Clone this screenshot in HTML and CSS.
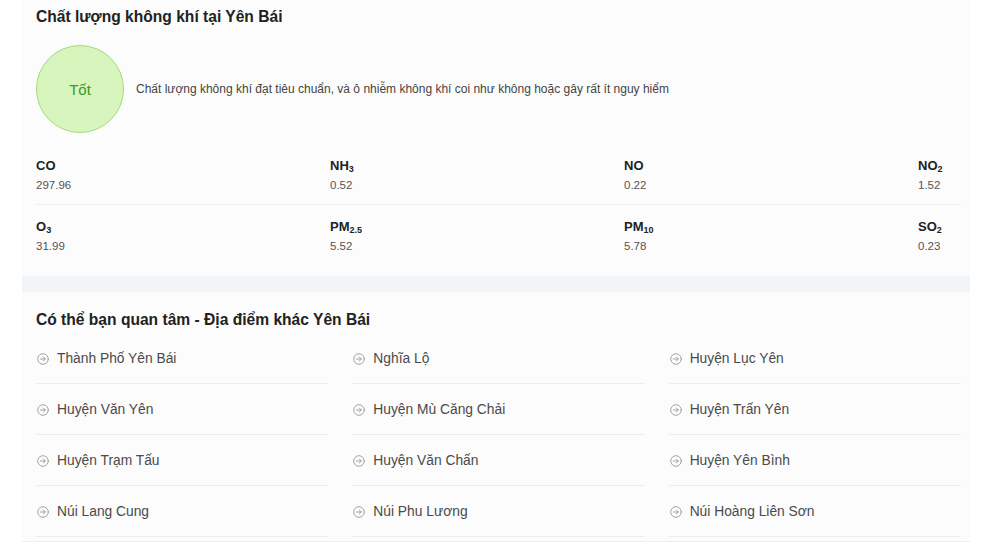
FILE: index.html
```html
<!DOCTYPE html>
<html lang="vi">
<head>
<meta charset="utf-8">
<link rel="stylesheet" href="styles.css">
</head>
<body>
<div class="wrap">
  <section class="card aq">
    <h2 class="title">Chất lượng không khí tại Yên Bái</h2>
    <div class="status">
      <div class="badge">Tốt</div>
      <p class="desc">Chất lượng không khí đạt tiêu chuẩn, và ô nhiễm không khí coi như không hoặc gây rất ít nguy hiểm</p>
    </div>
    <div class="prow">
      <div class="pol"><div class="pname">CO</div><div class="pval">297.96</div></div>
      <div class="pol"><div class="pname">NH<sub>3</sub></div><div class="pval">0.52</div></div>
      <div class="pol"><div class="pname">NO</div><div class="pval">0.22</div></div>
      <div class="pol"><div class="pname">NO<sub>2</sub></div><div class="pval">1.52</div></div>
    </div>
    <div class="prow last">
      <div class="pol"><div class="pname">O<sub>3</sub></div><div class="pval">31.99</div></div>
      <div class="pol"><div class="pname">PM<sub>2.5</sub></div><div class="pval">5.52</div></div>
      <div class="pol"><div class="pname">PM<sub>10</sub></div><div class="pval">5.78</div></div>
      <div class="pol"><div class="pname">SO<sub>2</sub></div><div class="pval">0.23</div></div>
    </div>
  </section>
  <div class="band"></div>
  <section class="card places">
    <h2 class="title">Có thể bạn quan tâm - Địa điểm khác Yên Bái</h2>
    <ul class="plist">
      <li><svg class="ic" viewBox="0 0 12 12"><circle cx="6" cy="6" r="5.3"/><path d="M3.3 6h5M6.3 4l2 2-2 2"/></svg>Thành Phố Yên Bái</li>
      <li><svg class="ic" viewBox="0 0 12 12"><circle cx="6" cy="6" r="5.3"/><path d="M3.3 6h5M6.3 4l2 2-2 2"/></svg>Nghĩa Lộ</li>
      <li><svg class="ic" viewBox="0 0 12 12"><circle cx="6" cy="6" r="5.3"/><path d="M3.3 6h5M6.3 4l2 2-2 2"/></svg>Huyện Lục Yên</li>
      <li><svg class="ic" viewBox="0 0 12 12"><circle cx="6" cy="6" r="5.3"/><path d="M3.3 6h5M6.3 4l2 2-2 2"/></svg>Huyện Văn Yên</li>
      <li><svg class="ic" viewBox="0 0 12 12"><circle cx="6" cy="6" r="5.3"/><path d="M3.3 6h5M6.3 4l2 2-2 2"/></svg>Huyện Mù Căng Chải</li>
      <li><svg class="ic" viewBox="0 0 12 12"><circle cx="6" cy="6" r="5.3"/><path d="M3.3 6h5M6.3 4l2 2-2 2"/></svg>Huyện Trấn Yên</li>
      <li><svg class="ic" viewBox="0 0 12 12"><circle cx="6" cy="6" r="5.3"/><path d="M3.3 6h5M6.3 4l2 2-2 2"/></svg>Huyện Trạm Tấu</li>
      <li><svg class="ic" viewBox="0 0 12 12"><circle cx="6" cy="6" r="5.3"/><path d="M3.3 6h5M6.3 4l2 2-2 2"/></svg>Huyện Văn Chấn</li>
      <li><svg class="ic" viewBox="0 0 12 12"><circle cx="6" cy="6" r="5.3"/><path d="M3.3 6h5M6.3 4l2 2-2 2"/></svg>Huyện Yên Bình</li>
      <li><svg class="ic" viewBox="0 0 12 12"><circle cx="6" cy="6" r="5.3"/><path d="M3.3 6h5M6.3 4l2 2-2 2"/></svg>Núi Lang Cung</li>
      <li><svg class="ic" viewBox="0 0 12 12"><circle cx="6" cy="6" r="5.3"/><path d="M3.3 6h5M6.3 4l2 2-2 2"/></svg>Núi Phu Lương</li>
      <li><svg class="ic" viewBox="0 0 12 12"><circle cx="6" cy="6" r="5.3"/><path d="M3.3 6h5M6.3 4l2 2-2 2"/></svg>Núi Hoàng Liên Sơn</li>
    </ul>
  </section>
  <div class="foot"></div>
</div>
</body>
</html>
```

FILE: styles.css
```css
* { box-sizing: border-box; }
html, body { margin: 0; padding: 0; background: #fff; }
body {
  font-family: "Liberation Sans", Arial, sans-serif;
  color: #333;
}
.wrap {
  width: 948px;
  margin-left: 22px;
}
.card {
  background: #fcfcfc;
  padding: 7px 9px 0 14px;
}
.title {
  margin: 0;
  font-size: 15.6px;
  line-height: 20px;
  font-weight: bold;
  color: #222;
}
.status {
  display: flex;
  align-items: center;
  gap: 12px;
  margin-top: 18px;
}
.badge {
  width: 88px;
  height: 88px;
  flex: none;
  border-radius: 50%;
  background: #d7f5bd;
  border: 1px solid #9fdc7c;
  display: flex;
  align-items: center;
  justify-content: center;
  color: #3d9a22;
  font-size: 15px;
}
.desc {
  margin: 0;
  font-size: 12px;
  line-height: 15px;
  color: #444;
}
.prow {
  display: grid;
  grid-template-columns: 294px 294px 294px auto;
  margin-top: 24px;
  padding-bottom: 11px;
  border-bottom: 1px solid #efefef;
}
.prow.last {
  margin-top: 0;
  padding-top: 13px;
  padding-bottom: 22px;
  border-bottom: none;
}
.pname {
  font-size: 13px;
  line-height: 17px;
  font-weight: bold;
  color: #222;
}
.pname sub {
  font-size: 9px;
  line-height: 0;
  vertical-align: -2px;
}
.pval {
  margin-top: 4px;
  font-size: 11.5px;
  line-height: 15px;
  color: #555;
}
.band {
  height: 16px;
  background: #f2f5f7;
}
.places {
  padding-top: 18px;
  padding-bottom: 4px;
}
.plist {
  list-style: none;
  margin: 3px 0 0;
  padding: 0;
  display: grid;
  grid-template-columns: repeat(3, 1fr);
  column-gap: 24px;
}
.plist li {
  display: flex;
  align-items: center;
  gap: 8px;
  padding: 17px 0 16px 1px;
  line-height: 17px;
  font-size: 13.8px;
  color: #4a4a4a;
  border-bottom: 1px solid #ececec;
}
.ic {
  width: 12px;
  height: 12px;
  flex: none;
  fill: none;
  stroke: #9a9a9a;
  stroke-width: 0.9;
  stroke-linecap: round;
  stroke-linejoin: round;
}
.foot {
  height: 2px;
  border-top: 1px solid #eeeeee;
}
```
